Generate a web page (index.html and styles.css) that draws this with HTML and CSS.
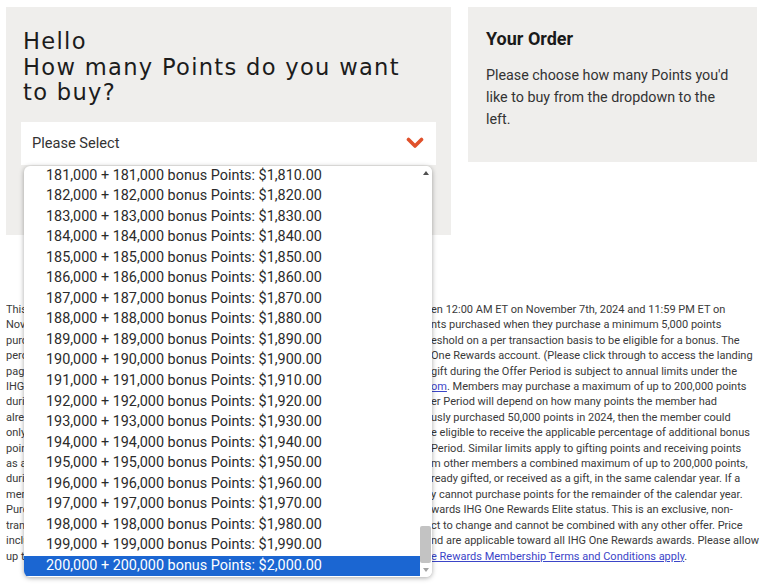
FILE: index.html
```html
<!DOCTYPE html>
<html lang="en">
<head>
<meta charset="utf-8">
<title>Buy Points</title>
<link rel="stylesheet" href="styles.css">
</head>
<body>
<div class="top">
  <section class="buy">
    <h1 class="title">Hello<br>How many Points do you want<br>to buy?</h1>
    <div class="picker">
      <div class="select">
        <span>Please Select</span>
        <svg class="chev" width="18" height="12" viewBox="0 0 18 12"><polyline points="2.5,2.5 9,9 15.5,2.5" fill="none" stroke="#e0512b" stroke-width="3.6" stroke-linecap="round" stroke-linejoin="round"/></svg>
      </div>
      <div class="listbox">
        <ul class="options">
          <li>181,000 + 181,000 bonus Points: $1,810.00</li>
          <li>182,000 + 182,000 bonus Points: $1,820.00</li>
          <li>183,000 + 183,000 bonus Points: $1,830.00</li>
          <li>184,000 + 184,000 bonus Points: $1,840.00</li>
          <li>185,000 + 185,000 bonus Points: $1,850.00</li>
          <li>186,000 + 186,000 bonus Points: $1,860.00</li>
          <li>187,000 + 187,000 bonus Points: $1,870.00</li>
          <li>188,000 + 188,000 bonus Points: $1,880.00</li>
          <li>189,000 + 189,000 bonus Points: $1,890.00</li>
          <li>190,000 + 190,000 bonus Points: $1,900.00</li>
          <li>191,000 + 191,000 bonus Points: $1,910.00</li>
          <li>192,000 + 192,000 bonus Points: $1,920.00</li>
          <li>193,000 + 193,000 bonus Points: $1,930.00</li>
          <li>194,000 + 194,000 bonus Points: $1,940.00</li>
          <li>195,000 + 195,000 bonus Points: $1,950.00</li>
          <li>196,000 + 196,000 bonus Points: $1,960.00</li>
          <li>197,000 + 197,000 bonus Points: $1,970.00</li>
          <li>198,000 + 198,000 bonus Points: $1,980.00</li>
          <li>199,000 + 199,000 bonus Points: $1,990.00</li>
          <li class="sel">200,000 + 200,000 bonus Points: $2,000.00</li>
        </ul>
        <div class="scrollbar">
          <span class="arrow up"></span>
          <span class="track"><span class="thumb"></span></span>
          <span class="arrow down"></span>
        </div>
      </div>
    </div>
  </section>
  <aside class="order">
    <h2>Your Order</h2>
    <p>Please choose how many Points you'd like to buy from the dropdown to the left.</p>
  </aside>
</div>
<div class="terms">
  <div class="ln"><span class="a">This offer is valid for purchases made betwe</span><span class="b">en 12:00 AM ET on November 7th, 2024 and 11:59 PM ET on</span></div>
  <div class="ln"><span class="a">November 21st, 2024 (the "Offer Period"). Members will receive a 100% bonus on poi</span><span class="b">nts purchased when they purchase a minimum 5,000 points</span></div>
  <div class="ln"><span class="a">purchased. Members must meet the minimum points purchase thr</span><span class="b">eshold on a per transaction basis to be eligible for a bonus. The</span></div>
  <div class="ln"><span class="a">percentage of bonus points will be deposited into the member's IHG </span><span class="b">One Rewards account. (Please click through to access the landing</span></div>
  <div class="ln"><span class="a">page for details of the applicable bonus.) Buying points or receiving points as a </span><span class="b">gift during the Offer Period is subject to annual limits under the</span></div>
  <div class="ln"><span class="a">IHG One Rewards Membership Terms and Conditions found at <a href="#">ihg.c</a></span><span class="b"><a href="#">om</a>. Members may purchase a maximum of up to 200,000 points</span></div>
  <div class="ln"><span class="a">during the calendar year. The bonus points a member receives during the Off</span><span class="b">er Period will depend on how many points the member had</span></div>
  <div class="ln"><span class="a">already purchased in 2024. For example, if a member had previo</span><span class="b">usly purchased 50,000 points in 2024, then the member could</span></div>
  <div class="ln"><span class="a">only purchase an additional 150,000 points and would only b</span><span class="b">e eligible to receive the applicable percentage of additional bonus</span></div>
  <div class="ln"><span class="a">points on those 150,000 points purchased during the Offer </span><span class="b">Period. Similar limits apply to gifting points and receiving points</span></div>
  <div class="ln"><span class="a">as a gift. Members may gift to or receive fro</span><span class="b">m other members a combined maximum of up to 200,000 points,</span></div>
  <div class="ln"><span class="a">during the calendar year, inclusive of points purchased, al</span><span class="b">ready gifted, or received as a gift, in the same calendar year. If a</span></div>
  <div class="ln"><span class="a">member has reached the annual limit of 200,000 points, the member ma</span><span class="b">y cannot purchase points for the remainder of the calendar year.</span></div>
  <div class="ln"><span class="a">Purchased points do not count toward qualifying points or nights to</span><span class="b">wards IHG One Rewards Elite status. This is an exclusive, non-</span></div>
  <div class="ln"><span class="a">transferable offer. Offer and pricing are subje</span><span class="b">ct to change and cannot be combined with any other offer. Price</span></div>
  <div class="ln"><span class="a">includes all applicable taxes. Purchased points are non-refundable a</span><span class="b">nd are applicable toward all IHG One Rewards awards. Please allow</span></div>
  <div class="ln"><span class="a">up to 72 hours for points to be posted to the account. <a href="#">IHG On</a></span><span class="b"><a href="#">e Rewards Membership Terms and Conditions apply</a>.</span></div>
</div>
</body>
</html>
```
FILE: styles.css
```css
html, body {
  margin: 0;
  background: #ffffff;
}
body {
  font-family: Roboto, "Liberation Sans", sans-serif;
  color: #333333;
  width: 768px;
  height: 584px;
  overflow: hidden;
}
.top {
  display: flex;
  align-items: flex-start;
  gap: 17px;
  padding: 7px 0 0 6px;
}
.buy {
  width: 445px;
  height: 228px;
  box-sizing: border-box;
  background: #efeeec;
  padding: 22px 15px 0 15px;
}
.title {
  margin: 0 0 0 2px;
  font: 400 22.6px/25.5px "DejaVu Sans", sans-serif;
  letter-spacing: 1.3px;
  color: #1c1c1c;
}
.picker {
  position: relative;
  margin-top: 16px;
}
.select {
  height: 43px;
  background: #ffffff;
  display: flex;
  align-items: center;
  justify-content: space-between;
  padding: 0 12px 0 11px;
  font-size: 14.6px;
  color: #333333;
}
.chev {
  display: block;
}
.listbox {
  position: absolute;
  left: 3px;
  top: 44px;
  width: 408px;
  height: 411px;
  background: #ffffff;
  border-radius: 6px;
  box-shadow: 0 1px 5px rgba(0, 0, 0, 0.35);
  display: flex;
  overflow: hidden;
  z-index: 2;
}
.options {
  list-style: none;
  margin: 0;
  padding: 0;
  flex: 1;
}
.options li {
  height: 20.55px;
  line-height: 20.55px;
  padding-left: 22px;
  font-size: 14.4px;
  color: #2b2b2b;
  white-space: nowrap;
}
.options li.sel {
  background: #1b66d2;
  color: #ffffff;
}
.scrollbar {
  width: 12px;
  display: flex;
  flex-direction: column;
  background: #ffffff;
}
.arrow {
  height: 14px;
  position: relative;
}
.arrow::after {
  content: "";
  position: absolute;
  left: 3px;
  top: 5px;
  border-left: 3px solid transparent;
  border-right: 3px solid transparent;
}
.arrow.up::after {
  border-bottom: 4px solid #505050;
}
.arrow.down::after {
  border-top: 4px solid #a3a3a3;
}
.track {
  flex: 1;
  display: flex;
  flex-direction: column;
}
.thumb {
  margin-top: auto;
  height: 37px;
  width: 11px;
  background: #c3c3c3;
  border-radius: 2px;
}
.order {
  width: 289px;
  height: 155px;
  box-sizing: border-box;
  background: #efeeec;
  padding: 22px 18px 0 18px;
}
.order h2 {
  margin: 0;
  font: 700 18px/20px Roboto, "Liberation Sans", sans-serif;
  color: #1a1a1a;
}
.order p {
  margin: 15px 0 0 0;
  font-size: 14.3px;
  line-height: 22px;
  color: #333333;
}
.terms {
  margin-top: 67px;
  padding-left: 6px;
  font-size: 11px;
  line-height: 15.4px;
  color: #3a3a3a;
}
.ln {
  display: flex;
  white-space: nowrap;
}
.a {
  flex: none;
  width: 425px;
  overflow: hidden;
}
.b {
  flex: none;
}
.terms a {
  color: #3b45c8;
  text-decoration: underline;
}
```
